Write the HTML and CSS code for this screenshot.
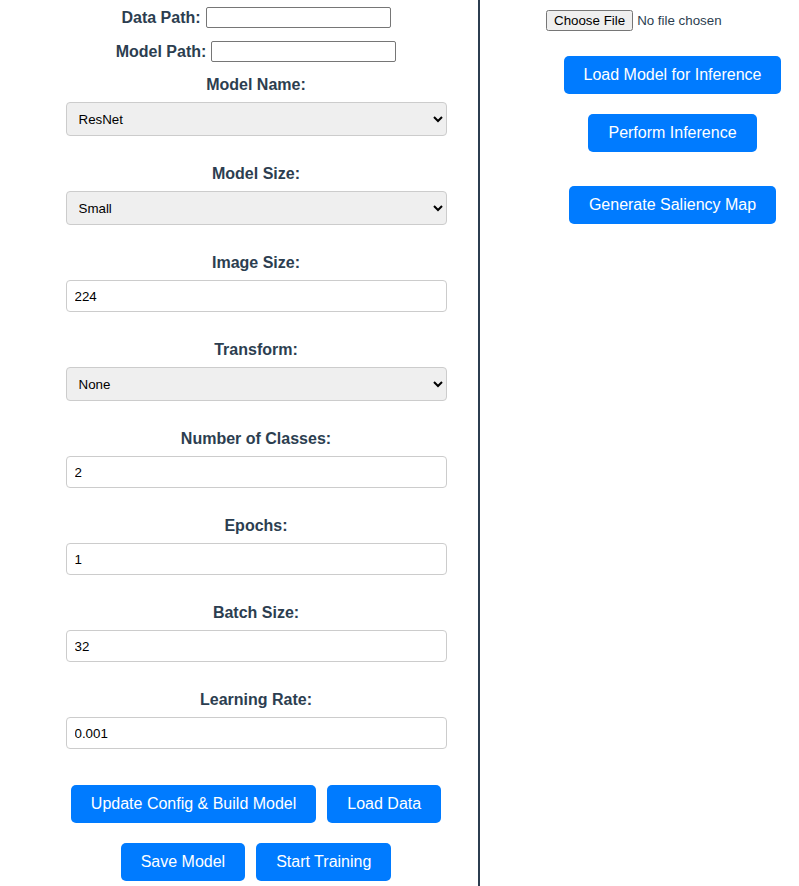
FILE: index.html
```html
<!DOCTYPE html>
<html lang="en">
<head>
<meta charset="utf-8">
<title>Model Trainer</title>
<link rel="stylesheet" href="styles.css">
</head>
<body>
<div class="app">
  <div class="left">
    <div class="path-row">
      <label class="inline-label" for="dp">Data Path:</label>
      <input class="path-input" id="dp" type="text">
    </div>
    <div class="path-row">
      <label class="inline-label" for="mp">Model Path:</label>
      <input class="path-input" id="mp" type="text">
    </div>

    <div class="group">
      <label class="label">Model Name:</label>
      <select class="field select">
        <option>ResNet</option>
      </select>
    </div>
    <div class="group">
      <label class="label">Model Size:</label>
      <select class="field select">
        <option>Small</option>
      </select>
    </div>
    <div class="group">
      <label class="label">Image Size:</label>
      <input class="field text" type="text" value="224">
    </div>
    <div class="group">
      <label class="label">Transform:</label>
      <select class="field select">
        <option>None</option>
      </select>
    </div>
    <div class="group">
      <label class="label">Number of Classes:</label>
      <input class="field text" type="text" value="2">
    </div>
    <div class="group">
      <label class="label">Epochs:</label>
      <input class="field text" type="text" value="1">
    </div>
    <div class="group">
      <label class="label">Batch Size:</label>
      <input class="field text" type="text" value="32">
    </div>
    <div class="group">
      <label class="label">Learning Rate:</label>
      <input class="field text" type="text" value="0.001">
    </div>

    <div class="btn-row first">
      <button class="btn">Update Config &amp; Build Model</button>
      <button class="btn">Load Data</button>
    </div>
    <div class="btn-row">
      <button class="btn">Save Model</button>
      <button class="btn">Start Training</button>
    </div>
  </div>

  <div class="right">
    <input class="file" type="file">
    <button class="btn load">Load Model for Inference</button>
    <button class="btn perform">Perform Inference</button>
    <button class="btn saliency">Generate Saliency Map</button>
  </div>
</div>
</body>
</html>
```

FILE: styles.css
```css
html, body {
  margin: 0;
  padding: 0;
  background: #ffffff;
}

body {
  font-family: "Liberation Sans", Arial, sans-serif;
  color: #2c3e50;
}

.app {
  display: flex;
  height: 886px;
}

.left {
  width: 481px;
  box-sizing: border-box;
  border-right: 2px solid #2c3e50;
  padding-left: 34px;
  padding-top: 7px;
  display: flex;
  flex-direction: column;
  align-items: center;
}

.path-row {
  display: flex;
  align-items: center;
  gap: 5px;
  height: 21px;
  margin-bottom: 13px;
}

.inline-label {
  font-size: 16px;
  font-weight: bold;
  color: #2c3e50;
}

.path-input {
  box-sizing: border-box;
  width: 185px;
  height: 21px;
  border: 1px solid #767676;
  border-radius: 2px;
  padding: 1px 2px;
  font-family: "Liberation Sans", Arial, sans-serif;
  font-size: 13.33px;
  background: #fff;
}

.group {
  display: flex;
  flex-direction: column;
  align-items: center;
  margin-bottom: 28px;
}

.label {
  display: block;
  font-size: 16px;
  font-weight: bold;
  line-height: 18px;
  padding-top: 1px;
  margin-bottom: 8px;
  color: #2c3e50;
}

.field {
  box-sizing: border-box;
  width: 381px;
  border: 1px solid #cccccc;
  border-radius: 4px;
  font-family: "Liberation Sans", Arial, sans-serif;
  font-size: 13.33px;
  color: #000;
}

.select {
  height: 34px;
  padding: 0 8px;
  background-color: #efefef;
}

.text {
  height: 32px;
  padding: 0 8px;
  background: #fff;
}

.btn-row {
  display: flex;
  gap: 11px;
  justify-content: center;
  margin-bottom: 20px;
}

.btn-row.first {
  margin-top: 8px;
}

.btn {
  background: #007bff;
  color: #ffffff;
  border: none;
  border-radius: 5px;
  padding: 10px 20px;
  font-family: "Liberation Sans", Arial, sans-serif;
  font-size: 16px;
  line-height: 18px;
  cursor: pointer;
}

.right {
  flex: 1;
  box-sizing: border-box;
  padding-left: 66px;
  display: flex;
  flex-direction: column;
  align-items: center;
}

.file {
  align-self: flex-start;
  margin-top: 10px;
  margin-left: 0;
  font-family: "Liberation Sans", Arial, sans-serif;
  font-size: 13.33px;
  color: #2c3e50;
}

.load {
  margin-top: 25px;
}

.perform {
  margin-top: 20px;
}

.saliency {
  margin-top: 34px;
}
```
